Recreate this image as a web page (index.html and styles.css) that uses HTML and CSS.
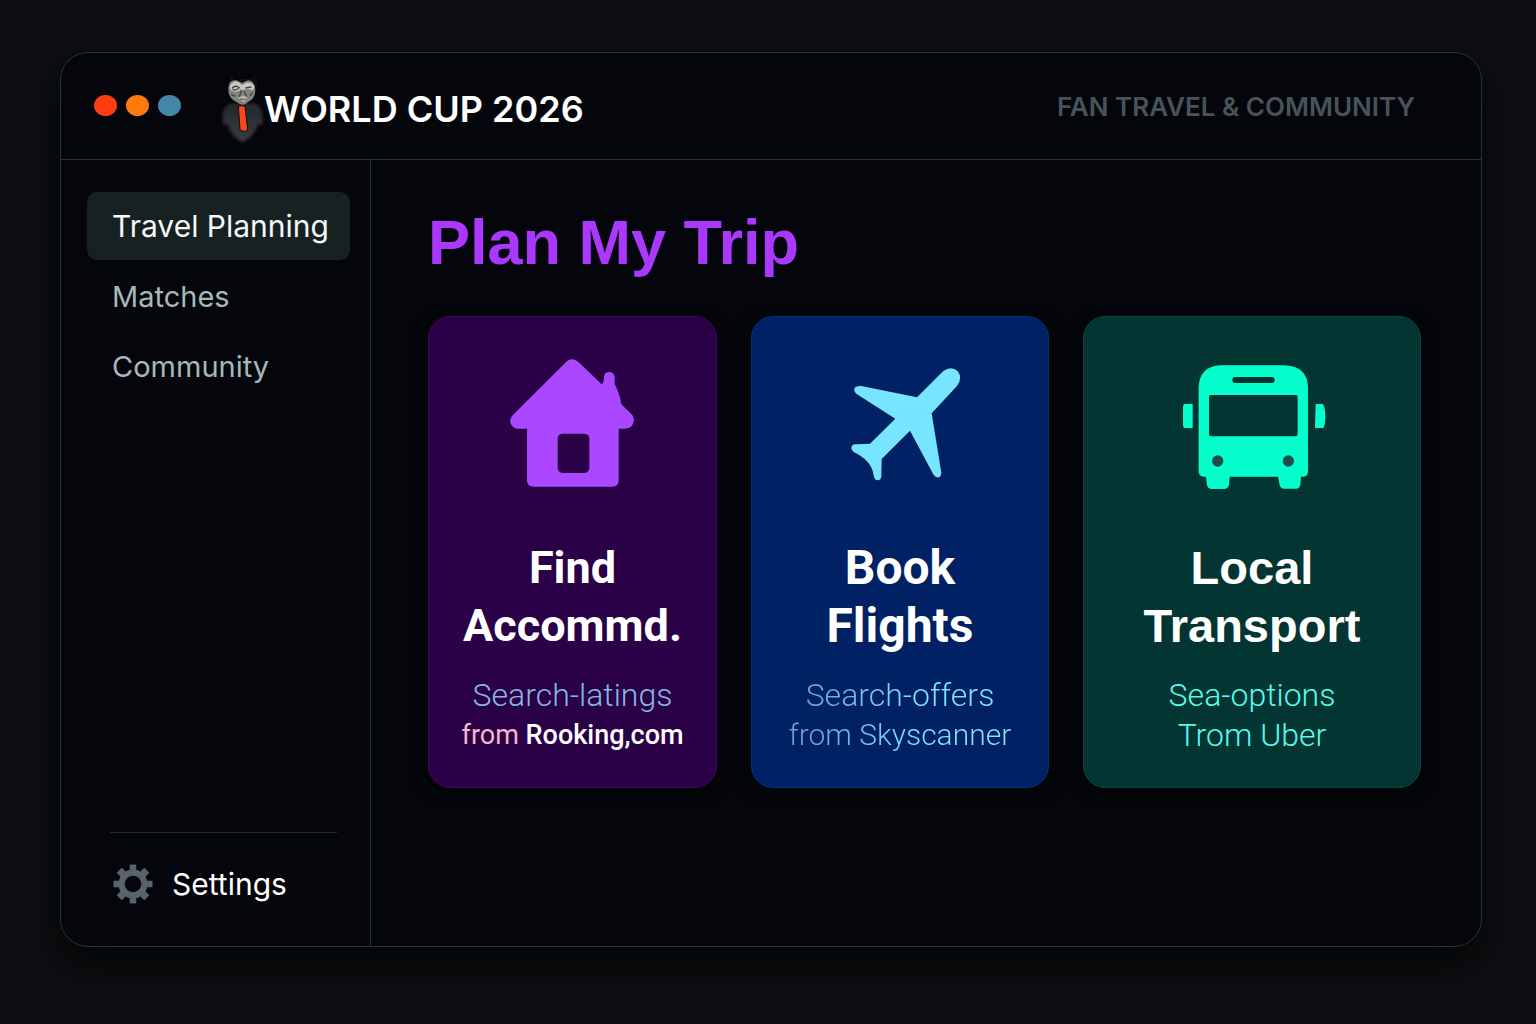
FILE: index.html
```html
<!DOCTYPE html>
<html lang="en">
<head>
<meta charset="utf-8">
<meta name="viewport" content="width=device-width, initial-scale=1">
<title>World Cup 2026 – Plan My Trip</title>
<link rel="stylesheet" href="styles.css">
</head>
<body>
<div class="window">
  <header class="topbar">
    <div class="controls">
      <button class="dot dot-red" type="button" aria-label="Close"></button>
      <button class="dot dot-orange" type="button" aria-label="Minimise"></button>
      <button class="dot dot-blue" type="button" aria-label="Zoom"></button>
    </div>
    <div class="brand">
      <svg class="logo" viewBox="0 0 132 240" aria-hidden="true">
        <defs>
          <filter id="soft" x="-20%" y="-20%" width="140%" height="140%"><feGaussianBlur stdDeviation="4"/></filter>
          <filter id="fine"><feGaussianBlur stdDeviation="1"/></filter>
          <linearGradient id="coat" x1="0" y1="0" x2="0" y2="1"><stop offset="0" stop-color="#24272b"/><stop offset="1" stop-color="#393c40"/></linearGradient>
        </defs>
        <g transform="translate(0 14)">
          <path d="M26 38 30 2 46 18 92 14 112 0 110 42Z" fill="#0b0c0f" filter="url(#soft)"/>
          <path d="M34 90Q14 94 8 118L10 154 22 152Q32 188 68 206 104 188 114 152L128 154 126 114Q118 92 102 88Z" fill="url(#coat)" filter="url(#soft)"/>
          <g filter="url(#fine)">
            <path d="M25 42Q27 18 48 20L66 28 84 20Q105 22 106 48 106 70 92 80L76 91Q66 96 54 88 22 74 25 42Z" fill="#85837f"/>
            <path d="M29 40Q36 20 55 24L66 35 79 27Q100 25 103 42L97 50Q82 42 70 50L64 47Q48 60 33 50Z" fill="#cbc8c2"/>
            <path d="M36 44Q46 33 58 42 50 52 38 47M76 43 94 40M64 50 58 70M72 52 80 70M34 62 46 68M90 66 98 56" fill="none" stroke="#45423f" stroke-width="4"/>
            <path d="M54 72 68 66 82 70 72 86Z" fill="#bab6af"/>
            <path d="M60 76 76 77" stroke="#4a4846" stroke-width="3"/>
          </g>
          <path d="M55 98Q65 94 75 98L83 168Q76 176 66 172L60 168Z" fill="#f9481a" stroke="#0c0d10" stroke-width="3"/>
        </g>
      </svg>
      <span class="brand-name">WORLD CUP 2026</span>
    </div>
    <span class="tagline">FAN TRAVEL &amp; COMMUNITY</span>
  </header>

  <div class="body">
    <aside class="sidebar">
      <nav class="nav" aria-label="Main">
        <a class="nav-item is-active" href="#travel" aria-current="page">Travel Planning</a>
        <a class="nav-item" href="#matches">Matches</a>
        <a class="nav-item" href="#community">Community</a>
      </nav>
      <div class="sidebar-foot">
        <button class="settings" type="button">
          <svg class="gear" viewBox="-20 -20 40 40" aria-hidden="true">
            <g fill="#59636e">
              <path d="M-3.2-19.5H3.2V19.5H-3.2ZM-19.5-3.2H19.5V3.2H-19.5Z"/>
              <path d="M-3.6-19.5H3.6V19.5H-3.6ZM-19.5-3.6H19.5V3.6H-19.5Z" transform="rotate(45)"/>
              <circle r="14.5"/>
            </g>
            <circle r="8.3" fill="#04060b"/>
          </svg>
          Settings
        </button>
      </div>
    </aside>

    <main class="content">
      <h1 class="page-title">Plan My Trip</h1>
      <div class="cards">
        <a class="card card-stay" href="#stay">
          <svg class="card-icon" viewBox="-6 0 510 480" aria-hidden="true">
            <path fill="#aa47ff" fill-rule="evenodd" d="M229 65Q245 51 263 64L335 133Q342 128 342 112 342 96 358 96 374 97 374 114V132Q390 163 394 193L427 225Q437 241 426 257 419 265 405 266H386V424Q385 439 370 440H128Q112 439 111 424V266H84Q66 264 61 248 58 235 71 223ZM217 281Q204 282 203 295V384Q204 398 218 399H283Q297 398 298 384V295Q297 282 283 281Z"/>
          </svg>
          <h2 class="card-title title-small">Find<br>Accommd.</h2>
          <p class="card-text"><span class="line">Search-latings</span><span class="line line-tight"><span class="pink">from</span> <strong>Rooking,com</strong></span></p>
        </a>
        <a class="card card-flight" href="#flights">
          <svg class="card-icon" viewBox="-45 -30 510 480" aria-hidden="true">
            <path fill="#77e5ff" d="M261 142 340 63Q363 46 383 63 399 84 381 108L305 190 334 368Q333 384 321 382 313 380 309 371L240 242 155 327 154 379Q153 391 143 391 134 390 132 381 128 350 110 333 96 318 70 305 60 296 67 286 72 281 82 283L120 281 196 206 80 132Q70 123 74 113 80 107 94 108Z"/>
          </svg>
          <h2 class="card-title">Book<br>Flights</h2>
          <p class="card-text"><span class="line">Search-offers</span><span class="line line-mid"><span class="dim">from</span> Skyscanner</span></p>
        </a>
        <a class="card card-bus" href="#transport">
          <svg class="card-icon" viewBox="-9 -30 510 480" aria-hidden="true">
            <path fill="#05ffcc" fill-rule="evenodd" d="M152 46H345Q413 50 414 112V366Q413 379 401 380H393L391 405Q389 416 378 416H341Q331 415 329 405L324 380H179L177 405Q174 416 164 417H124Q113 416 111 405L108 380H99Q86 378 86 364V112Q88 49 152 46ZM195 81Q187 82 187 90 187 98 195 99H306Q314 98 314 90 314 82 306 81ZM121 135Q117 136 117 140V254Q118 259 123 259H378Q383 258 383 253V140Q382 135 378 135ZM44 162H68V234H44Q39 233 39 226V172Q39 163 44 162ZM437 162H458Q466 170 466 198 466 224 460 234H435Z"/>
            <circle cx="143" cy="333" r="17" fill="#1b4c4c"/>
            <circle cx="355" cy="333" r="17" fill="#1b4c4c"/>
          </svg>
          <h2 class="card-title title-wide">Local<br>Transport</h2>
          <p class="card-text"><span class="line">Sea-options</span><span class="line">Trom Uber</span></p>
        </a>
      </div>
    </main>
  </div>
</div>
</body>
</html>
```
FILE: styles.css
```css
* { box-sizing: border-box; }

body {
  margin: 0;
  min-height: 100vh;
  padding: 52px 54px 77px 60px;
  display: flex;
  background: #0d0f12;
  color: #fff;
  font-family: Inter, "Liberation Sans", sans-serif;
}

a { color: inherit; text-decoration: none; }
button { font: inherit; color: inherit; border: 0; background: none; padding: 0; }

.window {
  flex: 1;
  display: flex;
  flex-direction: column;
  border: 1px solid #263536;
  border-radius: 28px;
  background: #04060b;
  box-shadow: 0 16px 40px rgba(0, 0, 0, 0.8);
}

.topbar {
  display: flex;
  align-items: center;
  height: 107px;
  padding: 0 66px 0 33px;
  border-bottom: 1px solid #263536;
}

.controls { display: flex; gap: 9px; margin-right: 39px; padding-bottom: 2px; }
.dot { width: 23px; height: 21px; border-radius: 50%; }
.dot-red { background: #ff3b12; }
.dot-orange { background: #ff7a0c; }
.dot-blue { background: #4585a8; }

.brand { display: flex; align-items: center; padding-top: 6px; }
.logo { width: 44px; height: 80px; }
.brand-name { font-size: 36px; font-weight: 600; line-height: 48px; }
.tagline { margin-left: auto; padding-top: 2px; color: #46545a; font-size: 26px; font-weight: 600; line-height: 32px; }

.body { flex: 1; display: flex; }

.sidebar {
  flex: 0 0 310px;
  display: flex;
  flex-direction: column;
  padding: 32px 20px 28px 26px;
  border-right: 1px solid #263536;
}

.nav { display: flex; flex-direction: column; gap: 2px; }
.nav-item {
  padding: 1px 20px 0 25px;
  border-radius: 10px;
  color: #a5b9bb;
  font-size: 29px;
  line-height: 67px;
  white-space: nowrap;
}
.nav-item.is-active { background: #172122; color: #f5f8f8; font-size: 30px; }

.sidebar-foot {
  margin: auto 13px 0 23px;
  padding-top: 17px;
  border-top: 1px solid #202d2e;
}
.settings { display: flex; align-items: center; gap: 19px; padding-left: 3px; font-size: 30px; line-height: 68px; }
.gear { width: 40px; height: 40px; }

.content { flex: 1; min-width: 0; padding: 42px 60px 42px 57px; }

.page-title {
  margin: 0 0 34px;
  color: #ab38ff;
  font-family: "Liberation Sans", Arial, sans-serif;
  font-size: 63px;
  font-weight: 700;
  line-height: 80px;
}

.cards { display: grid; grid-template-columns: 289fr 298fr 338fr; gap: 34px; }

.card {
  display: flex;
  flex-direction: column;
  align-items: center;
  padding: 23px 12px 32px;
  border: 1px solid;
  border-radius: 22px;
  text-align: center;
  box-shadow: 0 4px 14px rgba(0, 0, 0, 0.5);
}
.card-stay { background: #2a0047; border-color: #3e0466; color: #86b7e0; }
.card-flight { background: #002163; border-color: #023080; color: #80e5fc; }
.card-bus { background: #033532; border-color: #06453f; color: #57fbef; }

.card-icon { width: 170px; height: 160px; }

.card-title {
  margin: 39px 0 20px;
  color: #fff;
  font-family: Roboto, "Liberation Sans", sans-serif;
  font-size: 48px;
  font-weight: 700;
  line-height: 58px;
}
.title-small { font-size: 45px; }
.title-wide { font-family: "Liberation Sans", Arial, sans-serif; font-size: 47px; }

.card-text { margin: 0; font-family: Roboto, "Liberation Sans", sans-serif; font-size: 32px; font-weight: 300; line-height: 40px; }
.card-flight .card-text { color: transparent; background: linear-gradient(90deg, #6da4cf 10%, #80e5fc 60%); background-clip: text; -webkit-background-clip: text; }
.line { display: block; }
.line-mid { font-size: 30px; }
.line-tight { font-size: 27px; font-weight: 400; }
.line-tight strong { color: #fff; font-weight: 500; }
.pink { color: #f6b5cc; }
```
